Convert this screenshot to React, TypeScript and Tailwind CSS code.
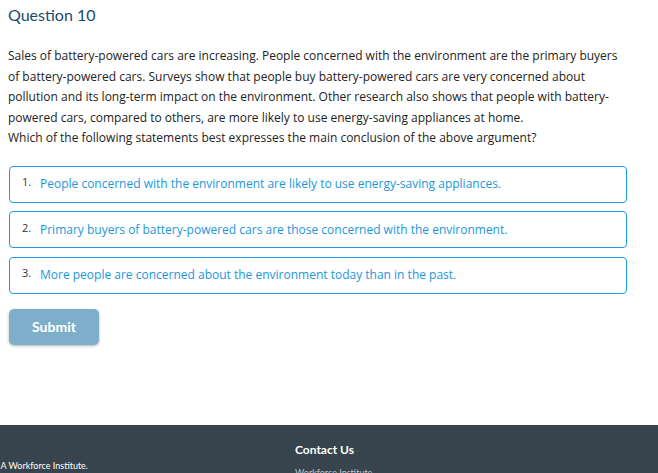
import React, { useState } from 'react'

const OPTIONS = [
  'People concerned with the environment are likely to use energy-saving appliances.',
  'Primary buyers of battery-powered cars are those concerned with the environment.',
  'More people are concerned about the environment today than in the past.',
]

const App: React.FC = () => {
  const [selected, setSelected] = useState<number | null>(null)

  return (
    <div className="flex flex-col min-h-[473px] bg-white font-['Open_Sans',sans-serif]">
      <div className="flex-grow px-[8px] pt-[5px] w-[628px]">
        <h2 className="font-['Lato',sans-serif] text-[16px] leading-[20px] text-[#1b4a70]">Question 10</h2>
        <div className="mt-[21px] text-[12px] leading-[20.6px] text-[#222]">
          <p>
            Sales of battery-powered cars are increasing. People concerned with the environment are the primary buyers
            of battery-powered cars. Surveys show that people buy battery-powered cars are very concerned about
            pollution and its long-term impact on the environment. Other research also shows that people with battery-
            powered cars, compared to others, are more likely to use energy-saving appliances at home.
          </p>
          <p>Which of the following statements best expresses the main conclusion of the above argument?</p>
        </div>

        <div className="mt-[17px] flex flex-col gap-[8.5px] pl-[1px]">
          {OPTIONS.map((text, i) => (
            <button
              key={i}
              onClick={() => setSelected(i)}
              className={`flex items-center h-[37px] w-[618px] rounded-[4px] border border-[#1a9fe8] pl-[12px] text-left ${
                selected === i ? 'bg-[#eef8fe]' : 'bg-white'
              }`}
            >
              <span className="w-[18px] text-[11px] text-[#333] -mt-[4px]">{i + 1}.</span>
              <span className="text-[12px] text-[#1a97dc]">{text}</span>
            </button>
          ))}
        </div>

        <button className="mt-[15px] ml-[1px] h-[36px] w-[90px] rounded-[5px] bg-[#7eafca] shadow-[0_1px_3px_rgba(0,0,0,0.3)] font-['Lato',sans-serif] font-bold text-[14px] text-white">
          Submit
        </button>
      </div>

      <footer className="h-[48px] bg-[#37444d] flex overflow-hidden">
        <div className="w-[88px] flex justify-end items-start pt-[34px] whitespace-nowrap font-['Lato',sans-serif] text-[9px] text-white">
          A Workforce Institute.
        </div>
        <div className="ml-[207px] pt-[17px] font-['Lato',sans-serif]">
          <div className="text-[12px] font-bold text-white leading-[16px]">Contact Us</div>
          <div className="mt-[8px] text-[9px] text-[#bcc3c8] whitespace-nowrap">Workforce Institute</div>
        </div>
      </footer>
    </div>
  )
}

export default App
